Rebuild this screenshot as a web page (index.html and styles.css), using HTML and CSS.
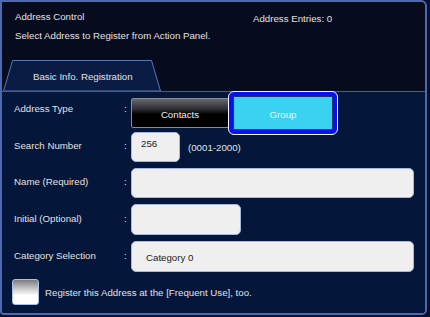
FILE: index.html
```html
<!DOCTYPE html>
<html>
<head>
<meta charset="utf-8">
<link rel="stylesheet" href="styles.css">
</head>
<body>
<div class="window">
  <div class="header">
    <div class="header-left">
      <div class="line">Address Control</div>
      <div class="line">Select Address to Register from Action Panel.</div>
    </div>
    <div class="header-right">Address Entries: 0</div>
  </div>
  <div class="tabs">
    <div class="tab">
      <svg class="tab-shape" width="158" height="31" viewBox="0 0 158 31">
        <polygon points="0.5,31 9.5,0.5 148.5,0.5 157.5,31" fill="#0a1c44" stroke="#5a76b6" stroke-width="1"/>
      </svg>
      <span class="tab-text">Basic Info. Registration</span>
    </div>
  </div>
  <div class="panel">
    <div class="row row-type">
      <div class="label label-type">Address Type</div>
      <div class="colon colon-type">:</div>
      <div class="seg">
        <div class="seg-btn">Contacts</div>
        <div class="seg-sel"><div class="seg-sel-inner">Group</div></div>
      </div>
    </div>
    <div class="row">
      <div class="label">Search Number</div>
      <div class="colon">:</div>
      <div class="field-wrap">
        <div class="input input-num">256</div>
        <span class="hint">(0001-2000)</span>
      </div>
    </div>
    <div class="row">
      <div class="label">Name (Required)</div>
      <div class="colon">:</div>
      <div class="input input-wide"></div>
    </div>
    <div class="row row-tall">
      <div class="label">Initial (Optional)</div>
      <div class="colon">:</div>
      <div class="input input-mid"></div>
    </div>
    <div class="row row-tall">
      <div class="label">Category Selection</div>
      <div class="colon">:</div>
      <div class="input input-wide input-cat">Category 0</div>
    </div>
    <div class="check-row">
      <div class="checkbox"></div>
      <span class="check-text">Register this Address at the [Frequent Use], too.</span>
    </div>
  </div>
</div>
</body>
</html>
```

FILE: styles.css
```css
html, body {
  margin: 0;
  padding: 0;
}
body {
  width: 430px;
  height: 317px;
  background: #0b1128;
  font-family: "Liberation Sans", Arial, sans-serif;
  font-size: 9.7px;
  color: #e2e2e2;
  overflow: hidden;
}
.window {
  box-sizing: border-box;
  width: 427px;
  height: 315px;
  border: 2px solid #4d69b2;
  border-radius: 0 6px 5px 4px;
  background: #070b1e;
  display: flex;
  flex-direction: column;
  overflow: hidden;
}
.header {
  height: 58px;
  display: flex;
  padding-left: 13px;
  box-sizing: border-box;
}
.header-left {
  width: 238px;
  padding-top: 9px;
}
.header-left .line {
  height: 18.7px;
  line-height: 12px;
}
.header-right {
  padding-top: 11px;
  line-height: 12px;
}
.tabs {
  height: 31px;
  padding-left: 1px;
  display: flex;
}
.tab {
  position: relative;
  width: 158px;
  height: 31px;
  display: flex;
  align-items: center;
}
.tab-shape {
  position: absolute;
  left: 0;
  top: 0;
}
.tab-text {
  position: relative;
  margin-left: 30px;
  margin-top: 2px;
}
.panel {
  flex: 1;
  background: #04163a;
  border-top: 1px solid #3f5ca4;
  padding: 6px 11px 0 12px;
}
.row {
  display: grid;
  grid-template-columns: 110px 7px 1fr;
  align-items: center;
  height: 30px;
  margin-bottom: 6px;
}
.row-type {
  margin-bottom: 4px;
}
.row-tall {
  height: 31px;
}
.label, .colon {
  margin-bottom: 2px;
  line-height: 12px;
}
.label-type, .colon-type {
  margin-bottom: 8px;
}
.seg {
  display: flex;
  align-items: center;
  height: 30px;
}
.seg-btn {
  box-sizing: border-box;
  width: 98px;
  height: 30px;
  border: 1px solid #8a8c94;
  border-radius: 2px;
  background: linear-gradient(#666870 0%, #2a2a2e 38%, #000 55%, #000 100%);
  color: #f0f0f0;
  display: flex;
  align-items: center;
  justify-content: center;
  padding-top: 3px;
}
.seg-sel {
  box-sizing: border-box;
  width: 110px;
  height: 44px;
  margin-left: -1px;
  flex: none;
  border: 1px solid #f2f4ff;
  border-radius: 6px;
  background: #0613ee;
  padding: 4px;
}
.seg-sel-inner {
  box-sizing: border-box;
  height: 100%;
  background: #3ad2f1;
  border: 1px solid #1c2f70;
  border-radius: 1px;
  color: #e8f6ff;
  display: flex;
  align-items: center;
  justify-content: center;
  padding-top: 2px;
}
.field-wrap {
  display: flex;
  align-items: center;
  height: 100%;
}
.input {
  box-sizing: border-box;
  height: 100%;
  background: #efefef;
  border: 1px solid #a6badf;
  border-radius: 5px;
  color: #1c1c1c;
}
.input-num {
  width: 49px;
  padding: 5px 0 0 9px;
  line-height: 12px;
}
.hint {
  margin-left: 8px;
}
.input-wide {
  width: 283px;
}
.input-mid {
  width: 110px;
}
.input-cat {
  display: flex;
  align-items: center;
  padding-left: 14px;
  padding-top: 1px;
}
.check-row {
  display: flex;
  align-items: center;
  margin-top: 7px;
  margin-left: -2px;
}
.checkbox {
  box-sizing: border-box;
  width: 27px;
  height: 26px;
  border: 1px solid #a9c0ee;
  border-radius: 3px;
  background: linear-gradient(#7c7c7c 0%, #cfcfcf 40%, #ffffff 65%, #ffffff 100%);
}
.check-text {
  margin-left: 6px;
}
```
